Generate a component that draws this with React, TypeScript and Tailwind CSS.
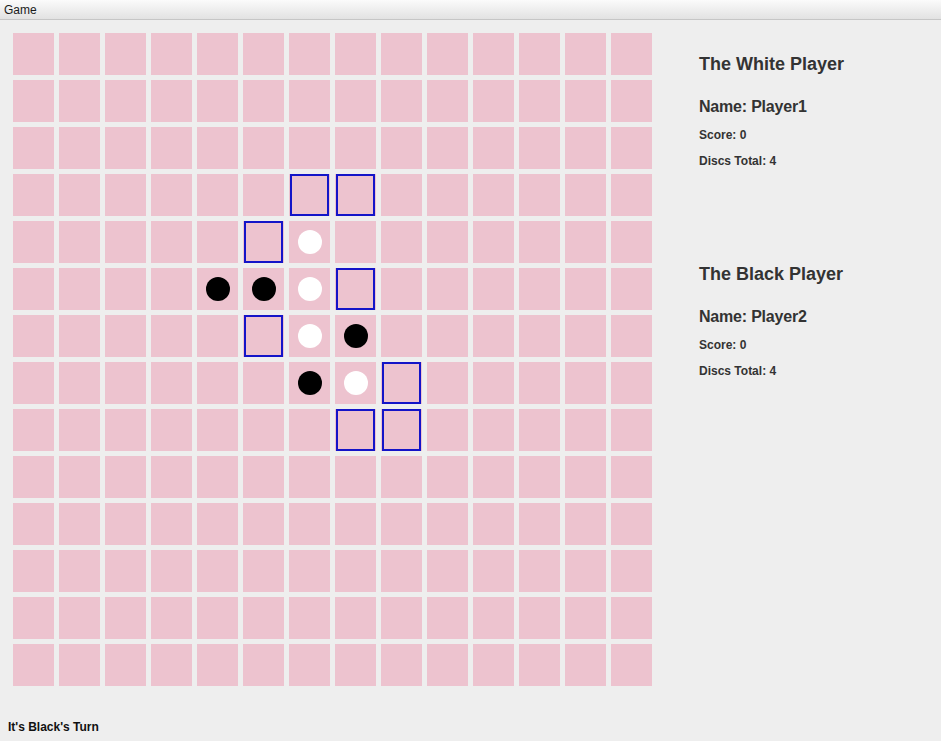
import React from "react";

type Cell = "" | "w" | "b" | "h";

const board: Record<string, Cell> = {
  "3-6": "h",
  "3-7": "h",
  "4-5": "h",
  "4-6": "w",
  "5-4": "b",
  "5-5": "b",
  "5-6": "w",
  "5-7": "h",
  "6-5": "h",
  "6-6": "w",
  "6-7": "b",
  "7-6": "b",
  "7-7": "w",
  "7-8": "h",
  "8-7": "h",
  "8-8": "h",
};

function PlayerInfo({ title, name }: { title: string; name: string }) {
  return (
    <div className="flex flex-col text-[#333333]">
      <div className="text-[18px] leading-[20px] font-bold">{title}</div>
      <div className="mt-[23px] text-[16px] leading-[20px] font-bold tracking-[-0.2px]">{name}</div>
      <div className="mt-[11px] text-[12px] leading-[14px] font-bold">Score: 0</div>
      <div className="mt-[12px] text-[12px] leading-[14px] font-bold">Discs Total: 4</div>
    </div>
  );
}

export default function App() {
  const rows = Array.from({ length: 14 }, (_, r) => r);
  const cols = Array.from({ length: 14 }, (_, c) => c);
  return (
    <div
      className="w-[941px] h-[741px] bg-[#eeeeee] flex flex-col overflow-hidden"
      style={{ fontFamily: "'Liberation Sans', Arial, sans-serif" }}
    >
      <div className="h-[20px] shrink-0 bg-gradient-to-b from-[#fbfbfb] to-[#e2e2e2] border-b border-[#c6c6c6] flex items-center pl-[4px] text-[12px] text-[#1a1a1a]">
        Game
      </div>
      <div className="flex flex-1 pt-[13px] pl-[13px]">
        <div className="grid grid-cols-[repeat(14,41px)] grid-rows-[repeat(14,42px)] gap-[5px] self-start">
          {rows.map((r) =>
            cols.map((c) => {
              const v = board[`${r}-${c}`] || "";
              return (
                <div key={`${r}-${c}`} className="bg-[#edc3cf] flex items-center justify-center">
                  {v === "h" && <div className="w-full h-full m-px border-2 border-[#1414c8]" />}
                  {v === "w" && <div className="w-6 h-6 rounded-full bg-white" />}
                  {v === "b" && <div className="w-6 h-6 rounded-full bg-black" />}
                </div>
              );
            })
          )}
        </div>
        <div className="ml-[47px] pt-[21px] flex flex-col">
          <PlayerInfo title="The White Player" name="Name: Player1" />
          <div className="h-[96px]" />
          <PlayerInfo title="The Black Player" name="Name: Player2" />
        </div>
      </div>
      <div className="pl-[8px] pb-[6px] text-[12px] leading-[15px] font-bold text-[#111111]">It's Black's Turn</div>
    </div>
  );
}
